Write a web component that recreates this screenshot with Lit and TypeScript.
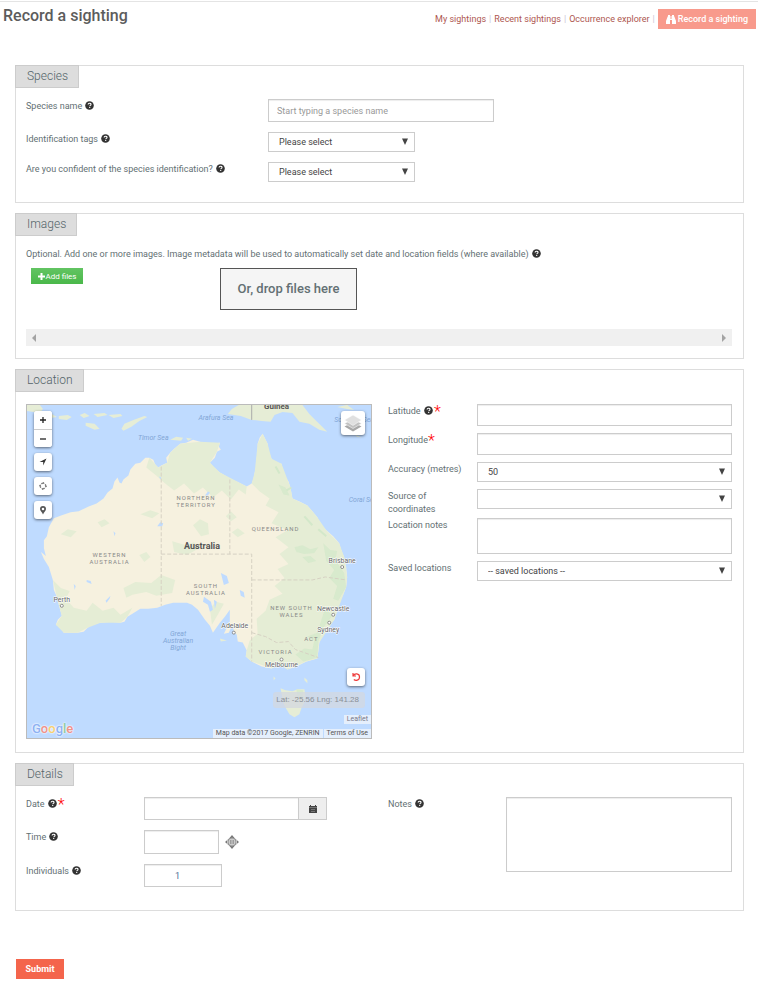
import { LitElement, html, svg, css } from "lit";
import { customElement } from "lit/decorators.js";

const helpIcon = html`<svg class="help" viewBox="0 0 9 9" role="img" aria-label="Help">
  <circle cx="4.5" cy="4.5" r="4.3" fill="#333" />
  <path d="M3.1 3.6c0-1.9 2.9-1.8 2.9-.2 0 .9-1.3 1-1.3 1.9M4.7 6.1v1" fill="none" stroke="#fff" stroke-width="1.1" />
</svg>`;

const star = html`<span class="star">*</span>`;

type Place = { x: number; y: number; t: string; k: string };
const places: Place[] = [
  { x: 251, y: 4, t: "Guinea", k: "country small" },
  { x: 190, y: 15, t: "Arafura Sea", k: "sea" },
  { x: 127, y: 35, t: "Timor Sea", k: "sea" },
  { x: 329, y: 17, t: "Solomon Sea", k: "sea" },
  { x: 338, y: 98, t: "Coral Sea", k: "sea" },
  { x: 152, y: 232, t: "Great", k: "sea" },
  { x: 152, y: 239, t: "Australian", k: "sea" },
  { x: 152, y: 246, t: "Bight", k: "sea" },
  { x: 170, y: 96, t: "NORTHERN", k: "state" },
  { x: 170, y: 103, t: "TERRITORY", k: "state" },
  { x: 83, y: 153, t: "WESTERN", k: "state" },
  { x: 83, y: 160, t: "AUSTRALIA", k: "state" },
  { x: 250, y: 127, t: "QUEENSLAND", k: "state" },
  { x: 180, y: 184, t: "SOUTH", k: "state" },
  { x: 180, y: 191, t: "AUSTRALIA", k: "state" },
  { x: 266, y: 206, t: "NEW SOUTH", k: "state" },
  { x: 266, y: 213, t: "WALES", k: "state" },
  { x: 286, y: 237, t: "ACT", k: "state" },
  { x: 250, y: 250, t: "VICTORIA", k: "state" },
  { x: 176, y: 145, t: "Australia", k: "country" },
  { x: 35, y: 198, t: "Perth", k: "city" },
  { x: 209, y: 224, t: "Adelaide", k: "city" },
  { x: 317, y: 159, t: "Brisbane", k: "city" },
  { x: 308, y: 207, t: "Newcastle", k: "city" },
  { x: 303, y: 228, t: "Sydney", k: "city" },
  { x: 256, y: 264, t: "Melbourne", k: "city" },
];
const towns = [[35, 202], [208, 229], [317, 163], [308, 211], [304, 219], [256, 256]];

const mainland =
  "M22 123L27 114 35 111 44 108 52 107 62 102 70 99 77 94 81 88 86 84 88 77 91 73 93 78 95 79 97 75 102 71 104 65 109 59 114 58 119 53 123 53 127 55 129 60 132 63 135 61 141 58 140 53 144 48 148 44 154 39 160 38 167 35 174 37 180 39 186 39 194 38 193 42 195 45 191 47 189 53 184 58 188 63 194 68 204 74 213 78 221 82 226 79 228 74 229 68 231 61 231 54 232 46 232 39 234 33 237 29 240 35 242 39 243 47 246 54 249 58 256 59 257 65 259 71 263 77 265 83 266 89 267 94 274 97 282 101 287 107 292 113 295 120 301 126 308 132 314 139 316 146 319 153 321 163 322 173 321 183 318 191 314 199 312 207 309 216 304 222 299 229 296 234 294 239 293 248 292 255 281 258 271 263 262 266 254 261 246 265 236 263 226 258 220 253 221 247 217 239 212 238 211 231 208 228 207 220 203 229 198 230 204 218 204 206 199 213 194 219 187 229 184 222 179 216 172 206 166 201 161 199 147 199 139 201 131 204 122 205 114 205 106 210 101 213 98 218 94 219 85 218 74 219 66 220 61 224 57 228 51 229 43 229 37 229 34 224 29 221 31 216 35 212 32 201 30 193 27 186 26 176 22 163 17 155 14 148 19 152 17 144 17 136 20 132z";

const mapArt = svg`
  <rect width="346" height="335" fill="#bfdbff" />
  <g fill="#e6edd6">
    <path d="M202 9L206 4 213 0 277 0 284 9 291 16 297 22 302 27 294 25 284 19 274 17 267 8 257 7 249 10 245 17 236 16 226 15 215 11z" />
    <path d="M0 0h13l3 4-3 4-13-2zM17 10l8-1 5 3-6 1zM32 11l9-1 4 2-5 3-8-1zM53 10l5-2 5 3-6 2zM67 9l11-1 3 2-10 2zM82 10l12-1 2 2-9 2zM59 18l9 1 5 5-5 1-9-4zM95 24l3-5 9-4 11-4 3 1-8 4-8 6-8 4zM144 35l6-3 7 1-2 3zM160 33l6 1-4 2z" />
    <path d="M312 2l10-2 7 5-7-1zM327 27l5 4 5 2-5-1z" />
    <path d="M255 285L260 287 267 288 272 286 279 286 280 292 279 299 276 305 274 311 269 314 264 311 261 306 258 300z" />
    <path d="M279 274l3 3v3l-3-3zM248 273l2 2-2 2zM194 235l7 2-6 1z" />
  </g>
  <path d=${mainland} fill="#f6f1df" />
  <g fill="#e5edd5">
    <path d="M123 53L132 63 141 58 144 48 154 39 174 37 194 38 191 47 184 58 194 68 221 82 220 90 213 85 205 95 196 86 187 93 177 83 168 89 158 79 148 86 139 79 130 71 120 63z" />
    <path d="M226 79L229 68 232 39 237 29 242 39 246 54 256 59 265 83 267 94 282 101 292 113 301 126 314 139 319 153 322 173 321 183 309 216 294 239 292 255 281 258 262 266 254 261 246 265 226 258 220 253 221 247 224 237 232 230 231 215 240 207 244 196 257 190 249 182 259 174 252 165 263 160 254 150 263 143 250 133 262 126 246 119 253 108 240 101 244 94 234 87z" />
    <path d="M26 176L34 184 43 187 39 195 47 204 60 207 66 199 76 207 87 204 94 211 106 204 101 213 94 219 74 219 61 224 51 229 37 229 29 221 35 212 32 201z" />
    <path d="M97 184l12-6 16 1 10-8 14 5-3 13-16 3-10-4-14 3-6 3zM167 121l7-6 8 4 1 11-8 2zM71 118l7-3 5 4-8 4zM114 110l10-4 9 3-7 5zM34 130l7-5 9 2-6 6zM113 151l7-3 4 5-6 5zM146 137l14 4 8-3 5 6-12 7-13-3zM206 128l6-4 7 5-7 4zM184 205l6-7 8 2-5 9-7 12zM200 112l5-5 6 6-6 4z" />
  </g>
  <g fill="#d3e8ca" opacity=".75">
    <path d="M298 139l7 7 7 1-2 9 9 13 2 14-8 14-5-2 4-13-8-8 5-8-8-9zM300 204l7 8-9 12-5 14-1 16-14 4-8-7 9-6 8 1 2-9-7-4 10-4zM269 143l8-2 8 4 8-2-4 6-10 1-8-2zM277 153l8-1 6 5-8 2zM253 80l7 3 4 8-6-1zM271 286l7 1-1 8-5-2z" />
  </g>
  <path d="M266 83l-5 3M250 62l4 7M279 112l8 9M293 125l8 7" stroke="#d3e8ca" stroke-width="2" fill="none" />
  <g fill="#bfdbff">
    <path d="M131 122l3-4 3 1-1 3zM179 91l3-4 2 1-2 3zM195 169l6 3 2 7-5 2zM178 193l7 5 2 8-3 2-2-7-5-3zM188 196l3 2-2 7zM214 186l4 2 1 6-4-2zM87 127l2 2-1 3zM60 176l4 1 1 3-5-2zM79 197l5-5-1 3-3 4zM133 72l2 1-1 2zM47 180l2 2-1 4zM8 151l4 3-1 2z" />
  </g>
  <g fill="none" stroke="#d6d1c3" stroke-width="1" stroke-dasharray="4 2">
    <path d="M135 62V202M135 150H226V258M204 75V150M226 176H287L300 173 321 176M226 229L240 233 251 239 263 238 270 246 293 254" />
  </g>
  <path d="M226 0V15" stroke="#aaa" stroke-width="1" />
  ${places.map((p) => svg`<text class=${p.k} x=${p.x} y=${p.y} text-anchor="middle">${p.t}</text>`)}
  ${towns.map(([x, y]) => svg`<circle cx=${x} cy=${y} r="1.5" fill="#fff" stroke="#777" stroke-width=".8" />`)}`;

@customElement("app-root")
export class AppRoot extends LitElement {
  static styles = css`
    :host {
      display: block;
      font-family: Roboto, "Liberation Sans", sans-serif;
      font-size: 9px;
      line-height: 13px;
      color: #637073;
      background: #fff;
      border-top: 1px solid #fff;
    }
    * { box-sizing: border-box; }
    .top {
      display: flex;
      justify-content: space-between;
      align-items: flex-start;
      border-top: 1px solid #e4e4e4;
      padding: 0 2px 0 3px;
      height: 64px;
    }
    h1 { margin: 4px 0 0; font-size: 16px; line-height: 20px; font-weight: 500; color: #5c5c5c; }
    .nav { display: flex; align-items: center; gap: 3px; margin-top: 7px; color: #c9c4d4; }
    a { color: #ae5750; text-decoration: none; }
    a.record {
      display: flex; align-items: center; gap: 2px; height: 20px; padding: 0 8px;
      background: #f89a8c; color: #fff; font-weight: 500;
    }
    a.record svg { width: 10px; height: 9px; }
    main { padding: 0 14px 0 15px; display: flex; flex-direction: column; gap: 10px; }
    section { border: 1px solid #ddd; padding: 0 11px 20px 10px; }
    h2 {
      width: fit-content; margin: -1px 0 11px -11px; height: 23px; padding: 0 10px 0 11px;
      border: 1px solid #ccc; background: #ddd;
      font-size: 12px; line-height: 20px; font-weight: 300; color: #546469;
    }
    section.images { padding-bottom: 12px; }
    section.location { padding-bottom: 13px; }
    section.location h2 { margin-bottom: 12px; }
    section.details { padding-bottom: 23px; }
    .help { width: 9px; height: 9px; vertical-align: -1px; margin-left: 1px; }
    .star { color: #f00; font-size: 16px; line-height: 8px; font-weight: 300; vertical-align: -3px; }
    .help + .star { margin-left: 1px; }
    input, select, textarea {
      display: block; width: 100%; margin: 0; border: 1px solid #ccc; border-radius: 0; background: #fff;
      font: inherit; color: #555; outline: none; padding: 0 8px; resize: none;
    }
    input, textarea { box-shadow: inset 0 1px 1px #00000013; }
    input { height: 23px; }
    input::placeholder { color: #999; opacity: 1; }
    select { appearance: none; height: 20px; padding: 0 10px; color: #444; }
    .select { position: relative; }
    .select svg { position: absolute; right: 7px; top: 6px; width: 6px; height: 7px; pointer-events: none; }
    .species { display: grid; grid-template-columns: 242px minmax(0, 226px); row-gap: 10px; }
    .species .select { width: 147px; }
    .species label, .fields label, .hint { padding-top: 1px; }
    .hint { margin: 0; }
    .upload { display: grid; grid-template-columns: 189px 1fr; padding: 7px 0 19px 5px; align-items: start; justify-items: start; }
    button { font: inherit; border: 0; border-radius: 0; padding: 0; margin: 0; cursor: pointer; }
    .add {
      display: flex; align-items: center; justify-content: center; gap: 1px; width: 52px; height: 16px;
      background: linear-gradient(#62c462, #4ab84a); color: #fff; font-size: 8px;
    }
    .add svg { width: 7px; height: 7px; }
    .drop {
      width: 137px; height: 42px; border: 1px solid #555; background: #f5f5f5;
      font-size: 13px; line-height: 40px; font-weight: 500; text-align: center;
    }
    .bar { display: flex; justify-content: space-between; align-items: center; height: 17px; padding: 0 6px; background: #f0f0f0; }
    .bar svg { width: 4px; height: 8px; }
    .halves { display: grid; grid-template-columns: 346fr 344fr; gap: 16px; align-items: start; }
    .coords { display: grid; grid-template-columns: 89px 1fr; }
    .coords label { padding: 1px 0 2px; }
    .coords input, .coords textarea, .coords .select { margin-bottom: 7px; }
    .coords input { height: 22px; }
    .coords textarea { height: 36px; }
    .map { position: relative; height: 335px; border: 1px solid #bbb; overflow: hidden; }
    .art { display: block; width: 100%; height: 100%; }
    .art text { font-size: 7px; }
    .art .state { font-size: 6px; letter-spacing: 1px; fill: #888; }
    .art .sea { font-style: italic; fill: #82a6d6; }
    .art .city { fill: #666; stroke: #fff; stroke-width: 1px; paint-order: stroke; }
    .art .country { font-size: 9px; font-weight: 700; fill: #555; }
    .art .country.small { font-size: 8px; }
    .tools { position: absolute; left: 7px; top: 6px; display: flex; flex-direction: column; gap: 6px; }
    .tool {
      display: grid; place-items: center; width: 18px; height: 18px; background: #fff; border-radius: 3px;
      box-shadow: 0 1px 3px #0008;
    }
    .tool svg { width: 10px; height: 10px; }
    .zoom { border-radius: 3px; box-shadow: 0 1px 3px #0008; background: #fff; }
    .zoom .tool { box-shadow: none; }
    .zoom .tool + .tool { border-top: 1px solid #ccc; border-radius: 0 0 3px 3px; }
    .layers { position: absolute; right: 6px; top: 6px; width: 24px; height: 24px; }
    .layers svg { width: 20px; height: 20px; }
    .reset { position: absolute; right: 6px; bottom: 52px; }
    .latlng {
      position: absolute; right: 6px; bottom: 30px; height: 16px; padding: 0 6px 0 3px; border-radius: 3px;
      background: #d3d8dfbb; color: #8a8f96; font: 8px/16px "Liberation Sans", sans-serif; white-space: nowrap;
    }
    .credit {
      position: absolute; right: 0; background: #f4f7fbb8; color: #555;
      font: 7px/9px Roboto, sans-serif; padding: 0 3px; white-space: nowrap;
    }
    .leaflet { bottom: 14px; color: #778; }
    .terms { bottom: 0; display: flex; padding: 0; gap: 1px; background: none; }
    .terms span, .terms a { background: #f4f7fbb8; padding: 0 3px; color: #555; }
    .google { position: absolute; left: 5px; bottom: 1px; font: 500 13px/16px Roboto, sans-serif; text-shadow: 0 0 2px #fff, 0 0 2px #fff; }
    .blue { color: #8db1f2; }
    .red { color: #f0918a; }
    .yellow { color: #f6d071; }
    .green { color: #8fcaa1; }
    .fields { display: grid; grid-template-columns: 118px 1fr; row-gap: 10px; }
    .date { display: flex; width: 183px; }
    .date input { flex: 1; min-width: 0; }
    .date button { display: grid; place-items: center; width: 28px; height: 23px; border: 1px solid #ccc; border-left: 0; background: #eee; }
    .date svg { width: 8px; height: 8px; }
    .time { display: flex; align-items: center; gap: 6px; }
    .time input { width: 75px; height: 24px; }
    .time svg { width: 14px; height: 14px; }
    .count { width: 78px; padding: 0 41px 0 0; text-align: right; color: #4f6f96; }
    .fields textarea { height: 75px; }
    .submit { width: 48px; height: 20px; margin: 48px 0 0 16px; background: #f4654c; color: #fff; font-weight: 700; display: block; }
  `;

  private dropdown(id: string, text: string) {
    return html`<div class="select">
      <select id=${id}><option>${text}</option></select>
      <svg viewBox="0 0 6 7" aria-hidden="true"><path d="M0 .5h6L3 7z" fill="#444" /></svg>
    </div>`;
  }

  render() {
    return html`
      <header class="top">
        <h1>Record a sighting</h1>
        <nav class="nav">
          <a href="#">My sightings</a><span>|</span><a href="#">Recent sightings</a><span>|</span><a href="#">Occurrence explorer</a><span>|</span>
          <a class="record" href="#">
            <svg viewBox="0 0 10 9" aria-hidden="true"><path fill="#fff" d="M2 0h2v1h.5v3h1V1H6V0h2v1l.5 1L10 6v3H6V5H4v4H0V6l1.500-4L2 1z" /></svg>Record a sighting</a>
        </nav>
      </header>
      <main>
        <section>
          <h2>Species</h2>
          <div class="species">
            <label for="name">Species name ${helpIcon}</label>
            <input id="name" placeholder="Start typing a species name" />
            <label for="tags">Identification tags ${helpIcon}</label>
            ${this.dropdown("tags", "Please select")}
            <label for="sure">Are you confident of the species identification? ${helpIcon}</label>
            ${this.dropdown("sure", "Please select")}
          </div>
        </section>
        <section class="images">
          <h2>Images</h2>
          <p class="hint">Optional. Add one or more images. Image metadata will be used to automatically set date and location fields (where available) ${helpIcon}</p>
          <div class="upload">
            <button class="add"><svg viewBox="0 0 7 7" aria-hidden="true"><path d="M3.500 0v7M0 3.500h7" stroke="#fff" stroke-width="2" /></svg>Add files</button>
            <div class="drop">Or, drop files here</div>
          </div>
          <div class="bar">
            <svg viewBox="0 0 4 8" aria-hidden="true"><path d="M4 0v8L0 4z" fill="#a3a3a3" /></svg>
            <svg viewBox="0 0 4 8" aria-hidden="true"><path d="M0 0v8l4-4z" fill="#a3a3a3" /></svg>
          </div>
        </section>
        <section class="location">
          <h2>Location</h2>
          <div class="halves">
            <div class="map">
              <svg class="art" viewBox="0 0 346 335" preserveAspectRatio="xMidYMid slice" role="img" aria-label="Map of Australia">${mapArt}</svg>
              <div class="tools">
                <div class="zoom">
                  <button class="tool" aria-label="Zoom in"><svg viewBox="0 0 10 10"><path d="M5 2v6M2 5h6" stroke="#222" stroke-width="1.300" /></svg></button>
                  <button class="tool" aria-label="Zoom out"><svg viewBox="0 0 10 10"><path d="M2 5h6" stroke="#222" stroke-width="1.300" /></svg></button>
                </div>
                <button class="tool" aria-label="Locate me"><svg viewBox="0 0 10 10"><path d="M8.500 1.500L5.200 8.500V5H1.500z" fill="#333" /></svg></button>
                <button class="tool" aria-label="Centre"><svg viewBox="0 0 10 10"><path d="M5 1.500L6.700 3.200M7 3.500L8.500 5M8.500 5L7 6.500M6.500 7L5 8.500M5 8.500L3.500 7M3 6.500L1.500 5M1.500 5L3 3.500M3.500 3L5 1.500" stroke="#666" stroke-width="1.300" stroke-dasharray="1.600 .8" fill="none" /></svg></button>
                <button class="tool" aria-label="Drop marker"><svg viewBox="0 0 10 10"><path fill-rule="evenodd" d="M5 1a3 3 0 0 1 3 3c0 1.500-2 3-3 5.500C4 7 2 5.500 2 4a3 3 0 0 1 3-3zM5 2.700a1.300 1.300 0 1 0 0 2.600 1.300 1.300 0 0 0 0-2.600z" fill="#555" /></svg></button>
              </div>
              <button class="tool layers" aria-label="Layers"><svg viewBox="0 0 20 20">
                <path d="M10 9l8.500 4.500L10 18.500 1.500 13.500z" fill="#a8a8a8" />
                <path d="M10 6l8.500 4.500L10 15.500 1.500 10.500z" fill="#c2c2c2" stroke="#fff" stroke-width=".5" />
                <path d="M10 2l8.500 5L10 12.500 1.500 7z" fill="#e0e0e0" stroke="#fff" stroke-width=".5" />
              </svg></button>
              <button class="tool reset" aria-label="Reset"><svg viewBox="0 0 10 10"><path d="M2 1v3h3M2.300 3.800C3.500 1 8.500 1.300 8.500 5S4.500 9 2.800 7.500" fill="none" stroke="#ee3b3b" stroke-width="1.200" /></svg></button>
              <div class="latlng">Lat: -25.56 Lng: 141.28</div>
              <a class="credit leaflet" href="#">Leaflet</a>
              <div class="credit terms"><span>Map data ©2017 Google, ZENRIN</span><a href="#">Terms of Use</a></div>
              <div class="google"><span class="blue">G</span><span class="red">o</span><span class="yellow">o</span><span class="blue">g</span><span class="green">l</span><span class="red">e</span></div>
            </div>
            <div class="coords">
              <label for="lat">Latitude ${helpIcon}${star}</label><input id="lat" />
              <label for="lng">Longitude${star}</label><input id="lng" />
              <label for="acc">Accuracy (metres)</label>${this.dropdown("acc", "50")}
              <label for="src">Source of<br />coordinates</label>${this.dropdown("src", "")}
              <label for="locnotes">Location notes</label><textarea id="locnotes"></textarea>
              <label for="saved">Saved locations</label>${this.dropdown("saved", "-- saved locations --")}
            </div>
          </div>
        </section>
        <section class="details">
          <h2>Details</h2>
          <div class="halves">
            <div class="fields">
              <label for="date">Date ${helpIcon}${star}</label>
              <div class="date"><input id="date" /><button aria-label="Pick a date"><svg viewBox="0 0 8 8"><path d="M1 0h1v1h4V0h1v1h1v7H0V1h1z" fill="#444" /><path d="M0 2.500h8M2 4.500h4M2 6.500h4" stroke="#999" stroke-width=".6" /></svg></button></div>
              <label for="time">Time ${helpIcon}</label>
              <div class="time"><input id="time" /><svg viewBox="0 0 14 14" aria-hidden="true"><path d="M7 0l3 3.500L14 7l-4 3.500L7 14l-3-3.500L0 7l4-3.500z" fill="#777" /><circle cx="7" cy="7" r="4" fill="#ccc" stroke="#999" /><path d="M7 5v4M5.500 5v4M8.500 5v4" stroke="#888" stroke-width=".7" /><path d="M2.500 5v4M11.500 5v4" stroke="#ddd" stroke-width=".7" /></svg></div>
              <label for="count">Individuals ${helpIcon}</label>
              <input id="count" class="count" value="1" />
            </div>
            <div class="fields">
              <label for="notes">Notes ${helpIcon}</label><textarea id="notes"></textarea>
            </div>
          </div>
        </section>
      </main>
      <button class="submit">Submit</button>
    `;
  }
}
